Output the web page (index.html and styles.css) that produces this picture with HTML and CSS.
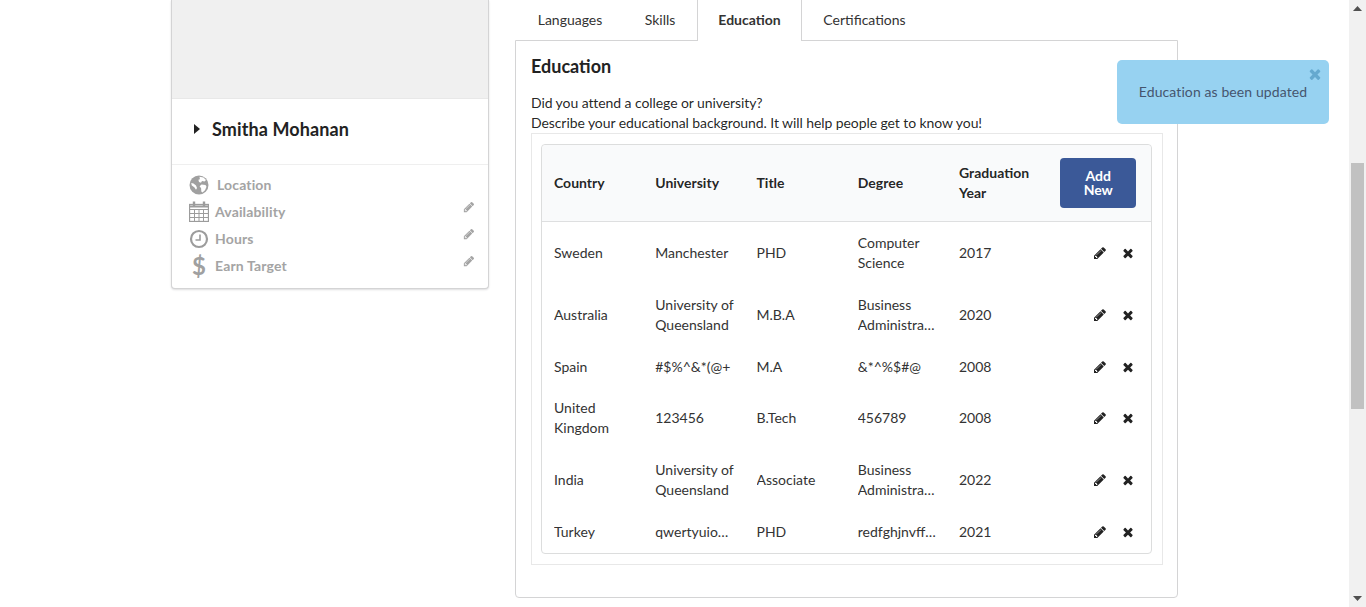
FILE: index.html
```html
<!DOCTYPE html>
<html>
    <head>
        <meta charset="utf-8">
        <title>Profile - Education</title>
        <link rel="stylesheet" href="styles.css">
    </head>
    <body>
        <svg class="defs" width="0" height="0">
            <symbol id="pencil" viewBox="0 0 1792 1792"><path d="M491 1536l91-91-235-235-91 91v107h128v128h107zm523-928q0-22-22-22-10 0-17 7l-542 542q-7 7-7 17 0 22 22 22 10 0 17-7l542-542q7-7 7-17zm-54-192l416 416-832 832h-416v-416zm683 96q0 53-37 90l-166 166-416-416 166-165q36-38 90-38 53 0 91 38l235 234q37 39 37 91z"/></symbol>
            <symbol id="times" viewBox="0 0 1792 1792"><path d="M1490 1322q0 40-28 68l-136 136q-28 28-68 28t-68-28l-294-294-294 294q-28 28-68 28t-68-28l-136-136q-28-28-28-68t28-68l294-294-294-294q-28-28-28-68t28-68l136-136q28-28 68-28t68 28l294 294 294-294q28-28 68-28t68 28l136 136q28 28 28 68t-28 68l-294 294 294 294q28 28 28 68z"/></symbol>
        </svg>

        <div class="page">
            <div class="sidebar">
                <div class="photo"></div>
                <div class="name-row">
                    <svg class="caret" width="6" height="10" viewBox="0 0 6 10"><path d="M0 0l6 5-6 5z"/></svg>
                    <span class="name">Smitha Mohanan</span>
                </div>
                <div class="details">
                    <div class="detail">
                        <svg class="detail-icon" width="20" height="20" viewBox="0 0 20 20">
                            <circle cx="10" cy="10" r="9.500" fill="#a0a0a0"/>
                            <path fill="#fff" d="M10.500 1.800l4 .6 2.500 2.600-1.500 1.600-2.500-.6-1 1.800-2-.8-.6-2.200 1.500-.6zM12.500 9.500l4 .4 1 1.800-1.500 3.500-2.500 2.300-1.200-1-.2-3.200-1.500-2zM2.200 8l2.300.5 2.500 2 1 2.400-1 1.800-1.700-2.400-2.500-1.800z"/>
                        </svg>
                        <span class="detail-label location">Location</span>
                    </div>
                    <div class="detail">
                        <svg class="detail-icon" width="20" height="21" viewBox="0 0 20 21" fill="none" stroke="#9c9c9c">
                            <rect x="0.500" y="3.500" width="19" height="17" stroke-width="1.300"/>
                            <path d="M.5 8.500h19M.5 12.500h19M.5 16.500h19M5.500 8v12M10 8v12M14.500 8v12"/>
                            <path stroke-width="2.400" d="M5 .5v4.500M15 .5v4.500"/>
                            <path stroke-width="2" d="M.5 5.500h19"/>
                        </svg>
                        <span class="detail-label">Availability</span>
                        <svg class="detail-edit"><use href="#pencil"/></svg>
                    </div>
                    <div class="detail">
                        <svg class="detail-icon" width="20" height="20" viewBox="0 0 20 20" fill="none" stroke="#9c9c9c">
                            <circle cx="10" cy="10" r="8" stroke-width="2.200"/>
                            <path stroke-width="1.600" d="M11 5.500v5.500H6.500"/>
                        </svg>
                        <span class="detail-label">Hours</span>
                        <svg class="detail-edit"><use href="#pencil"/></svg>
                    </div>
                    <div class="detail">
                        <span class="detail-icon dollar">$</span>
                        <span class="detail-label">Earn Target</span>
                        <svg class="detail-edit"><use href="#pencil"/></svg>
                    </div>
                </div>
            </div>

            <div class="content">
                <div class="tabs">
                    <a class="tab tab-languages">Languages</a>
                    <a class="tab tab-skills">Skills</a>
                    <a class="tab tab-education active">Education</a>
                    <a class="tab tab-certifications">Certifications</a>
                </div>
                <div class="panel">
                    <h3>Education</h3>
                    <p>Did you attend a college or university?<br>Describe your educational background. It will help people get to know you!</p>
                    <div class="table-wrap">
                        <table>
                            <thead>
                                <tr>
                                    <th>Country</th>
                                    <th>University</th>
                                    <th>Title</th>
                                    <th>Degree</th>
                                    <th>Graduation Year</th>
                                    <th class="add-cell"><button>Add New</button></th>
                                </tr>
                            </thead>
                            <tbody id="rows"></tbody>
                        </table>
                    </div>
                </div>
            </div>
        </div>

        <div class="toast">
            <svg class="toast-close"><use href="#times"/></svg>
            Education as been updated
        </div>

        <div class="scrollbar">
            <svg class="scroll-up" width="9" height="5" viewBox="0 0 9 5"><path d="M0 5l4.500-5 4.500 5z"/></svg>
            <div class="scroll-track"><div class="scroll-thumb"></div></div>
            <svg class="scroll-down" width="9" height="5" viewBox="0 0 9 5"><path d="M0 0l4.500 5 4.500-5z"/></svg>
        </div>

        <script src="rows.js"></script>
    </body>
</html>
```

FILE: rows.js
```js
var education = [
    [["Sweden"], ["Manchester"], ["PHD"], ["Computer", "Science"], "2017"],
    [["Australia"], ["University of", "Queensland"], ["M.B.A"], ["Business", "Administration"], "2020"],
    [["Spain"], ["#$%^&*(@+"], ["M.A"], ["&*^%$#@"], "2008"],
    [["United", "Kingdom"], ["123456"], ["B.Tech"], ["456789"], "2008"],
    [["India"], ["University of", "Queensland"], ["Associate"], ["Business", "Administration"], "2022"],
    [["Turkey"], ["qwertyuiopasdfgh"], ["PHD"], ["redfghjnvffghjkl"], "2021"]
];

function addCell(row, lines) {
    var td = document.createElement("td");
    row.appendChild(td);
    for (var i = 0; i < lines.length; i++) {
        var line = document.createElement("div");
        line.className = "clip";
        line.appendChild(document.createTextNode(lines[i]));
        td.appendChild(line);
    }
}

var body = document.getElementById("rows");
for (var i = 0; i < education.length; i++) {
    var row = document.createElement("tr");
    body.appendChild(row);
    for (var j = 0; j < 4; j++) {
        addCell(row, education[i][j]);
    }
    addCell(row, [education[i][4]]);
    var actions = document.createElement("td");
    actions.className = "actions";
    actions.innerHTML = '<svg class="action"><use href="#pencil"/></svg><svg class="action"><use href="#times"/></svg>';
    row.appendChild(actions);
}
```

FILE: styles.css
```css
html, body {
    margin: 0;
    height: 607px;
    overflow: hidden;
    background: #fff;
}
body {
    font-family: "Lato", "Liberation Sans", sans-serif;
    font-size: 14px;
    line-height: 20px;
    color: rgba(0, 0, 0, 0.87);
}
.defs {
    display: block;
}

.page {
    display: flex;
    align-items: flex-start;
    gap: 26px;
    padding-left: 171px;
}

/* left card */
.sidebar {
    box-sizing: border-box;
    width: 318px;
    height: 289px;
    background: #fff;
    border: 1px solid #d4d4d5;
    border-top: none;
    border-radius: 0 0 4px 4px;
    box-shadow: 0 1px 2px rgba(34, 36, 38, 0.15);
}
.photo {
    height: 98px;
    background: #f0f0f0;
    border-bottom: 1px solid #e8e8e8;
}
.name-row {
    display: flex;
    align-items: center;
    height: 59px;
    padding: 0 0 6px 22px;
    gap: 12px;
    border-bottom: 1px solid #efefef;
}
.caret {
    fill: #222;
}
.name {
    font-size: 18px;
    font-weight: 700;
    letter-spacing: 0.1px;
    color: #222;
}
.details {
    padding: 6px 13px 0 17px;
}
.detail {
    display: flex;
    align-items: center;
    height: 27px;
}
.detail-icon {
    flex: none;
    width: 20px;
    margin-right: 6px;
}
.dollar {
    font-size: 24px;
    font-weight: 700;
    text-align: center;
    color: #a0a0a0;
}
.detail-label {
    font-weight: 700;
    letter-spacing: 0.15px;
    color: #a4a4a4;
}
.location {
    margin-left: 2px;
}
.detail-edit {
    width: 12px;
    height: 12px;
    margin: -10px 0 0 auto;
    fill: #a4a4a4;
}

/* right column */
.content {
    width: 663px;
}
.tabs {
    display: flex;
    height: 41px;
    padding-left: 2px;
    box-sizing: border-box;
    color: #333;
}
.tab {
    box-sizing: border-box;
    flex: none;
    text-align: center;
    line-height: 40px;
}
.tab-languages {
    width: 106px;
}
.tab-skills {
    width: 74px;
}
.tab-education {
    width: 105px;
}
.tab-certifications {
    width: 125px;
}
.tab.active {
    position: relative;
    z-index: 1;
    height: 41px;
    font-weight: 700;
    background: #fff;
    border-left: 1px solid #d4d4d5;
    border-right: 1px solid #d4d4d5;
}
.panel {
    box-sizing: border-box;
    height: 558px;
    margin-top: -1px;
    padding: 14px 14px 0 15px;
    border: 1px solid #d4d4d5;
    border-radius: 0 0 4px 4px;
}
h3 {
    margin: 0;
    font-size: 18px;
    font-weight: 700;
    line-height: 22px;
    color: #222;
}
p {
    margin: 16px 0 0;
    letter-spacing: -0.08px;
}
.table-wrap {
    box-sizing: border-box;
    height: 432px;
    padding: 10px 10px 0 9px;
    border: 1px solid #e8e8e8;
}
table {
    width: 100%;
    table-layout: fixed;
    border-collapse: separate;
    border-spacing: 0;
    border: 1px solid #dcdddd;
    border-radius: 4px;
}
th {
    box-sizing: border-box;
    width: 101.25px;
    height: 77px;
    padding: 0 10px 0 12px;
    text-align: left;
    font-weight: 700;
    background: #f9fafb;
    border-bottom: 1px solid #dedfe0;
}
th:first-child {
    border-top-left-radius: 4px;
}
th:last-child {
    border-top-right-radius: 4px;
}
.add-cell {
    width: auto;
    padding: 0;
}
button {
    display: block;
    width: 76px;
    height: 50px;
    margin-left: 12px;
    padding: 0 14px;
    font: 700 14px/14px "Lato", sans-serif;
    color: #fff;
    background: #3b5998;
    border: none;
    border-radius: 4px;
}
td {
    padding: 11px 10px 11px 12px;
    color: #333;
}
tr:nth-child(3) td {
    padding-top: 10.5px;
    padding-bottom: 10.5px;
}
.clip {
    white-space: nowrap;
    overflow: hidden;
    text-overflow: ellipsis;
}
td.actions {
    text-align: right;
    padding-left: 0;
    padding-right: 16px;
}
.action {
    width: 14px;
    height: 14px;
    margin: 0 0 2px 14px;
    vertical-align: middle;
    fill: #222;
}

/* notification */
.toast {
    position: absolute;
    left: 1117px;
    top: 60px;
    width: 212px;
    height: 64px;
    line-height: 64px;
    text-align: center;
    letter-spacing: 0.1px;
    color: #45556e;
    background: #97d2f1;
    border-radius: 5px;
}
.toast-close {
    position: absolute;
    top: 6px;
    right: 6px;
    width: 16px;
    height: 16px;
    fill: #65a9cf;
}

/* fake browser scrollbar */
.scrollbar {
    position: fixed;
    top: 0;
    right: 0;
    bottom: 0;
    width: 17px;
    display: flex;
    flex-direction: column;
    align-items: center;
    background: #f1f1f1;
}
.scroll-up,
.scroll-down {
    flex: none;
    margin: 6px 0;
    fill: #505050;
}
.scroll-track {
    flex: 1;
    width: 100%;
}
.scroll-thumb {
    width: 13px;
    height: 246px;
    margin: 146px 2px 0;
    background: #c1c1c1;
}
```
